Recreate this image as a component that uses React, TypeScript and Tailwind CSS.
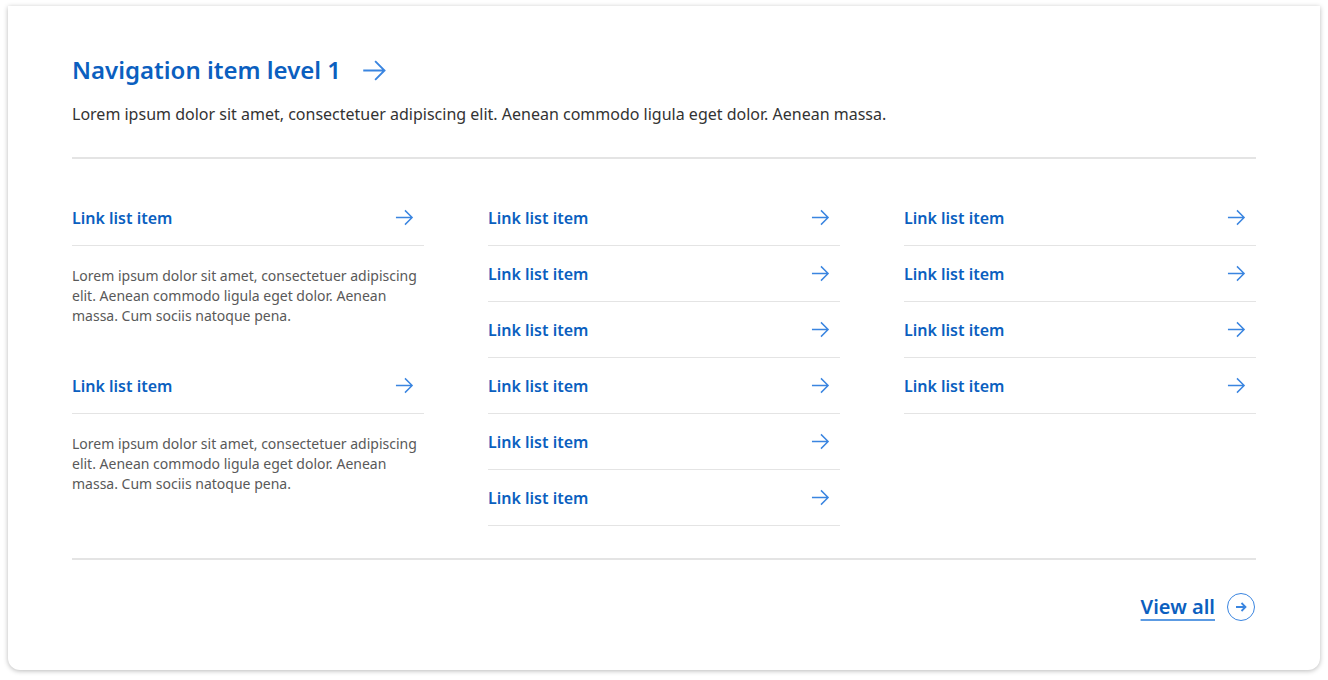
const col2 = Array.from({ length: 6 }, () => "Link list item");
const col3 = Array.from({ length: 4 }, () => "Link list item");

const desc =
  "Lorem ipsum dolor sit amet, consectetuer adipiscing elit. Aenean commodo ligula eget dolor. Aenean massa. Cum sociis natoque pena.";

// thin arrow used on the link rows and the heading
function Arrow({ className }: { className?: string }) {
  return (
    <svg viewBox="0 0 20 20" fill="none" stroke="currentColor" strokeWidth={1.5} className={className}>
      <path d="M1 10h17.5M10.5 2.5 18 10l-7.5 7.5" />
    </svg>
  );
}

function LinkRow({ label }: { label: string }) {
  return (
    <a
      href="#"
      className="flex h-14 items-center justify-between border-b border-[#e4e4e4] text-[16px] font-semibold text-[#0b5fbf]"
    >
      <span>{label}</span>
      <Arrow className="mr-[10px] h-[19px] w-[19px] text-[#3a85e0]" />
    </a>
  );
}

export default function App() {
  return (
    <div className="min-h-[680px] bg-white p-[6px_8px_10px_8px] font-['Noto_Sans',sans-serif]">
      <div className="rounded-b-xl bg-white px-16 pb-[49px] pt-[50px] shadow-[0_1px_5px_rgba(0,0,0,0.28)]">
        <a href="#" className="flex items-center gap-[21px] text-[24px] font-semibold leading-[28px] text-[#0b5fbf]">
          Navigation item level 1
          <Arrow className="h-[25px] w-[25px] text-[#3a85e0]" />
        </a>
        <p className="mt-[18px] text-[16px] leading-6 text-[#333]">
          Lorem ipsum dolor sit amet, consectetuer adipiscing elit. Aenean commodo ligula eget dolor. Aenean massa.
        </p>
        <div className="mt-[31px] border-t-2 border-[#e4e4e4]" />

        <div className="grid grid-cols-3 gap-16 pt-[31px]">
          <div>
            <LinkRow label="Link list item" />
            <p className="mb-8 mt-5 text-[14px] leading-5 text-[#595959]">{desc}</p>
            <LinkRow label="Link list item" />
            <p className="mt-5 text-[14px] leading-5 text-[#595959]">{desc}</p>
          </div>
          <div>
            {col2.map((l, i) => (
              <LinkRow key={i} label={l} />
            ))}
          </div>
          <div>
            {col3.map((l, i) => (
              <LinkRow key={i} label={l} />
            ))}
          </div>
        </div>

        <div className="mt-8 border-t-2 border-[#e4e4e4]" />
        <div className="mt-[33px] flex justify-end">
          <a
            href="#"
            className="flex items-center gap-3 pr-[1px] text-[20px] font-semibold leading-6 text-[#0b5fbf] underline decoration-[#5c9be3] decoration-2 underline-offset-[5px]"
          >
            View all
            <span className="flex h-7 w-7 items-center justify-center rounded-full border-[1.5px] border-[#3a85e0]">
              <svg viewBox="0 0 12 12" fill="none" stroke="#3a85e0" strokeWidth={1.8} className="h-3 w-3">
                <path d="M1 6h9.5M6.5 2 10.5 6l-4 4" />
              </svg>
            </span>
          </a>
        </div>
      </div>
    </div>
  );
}
